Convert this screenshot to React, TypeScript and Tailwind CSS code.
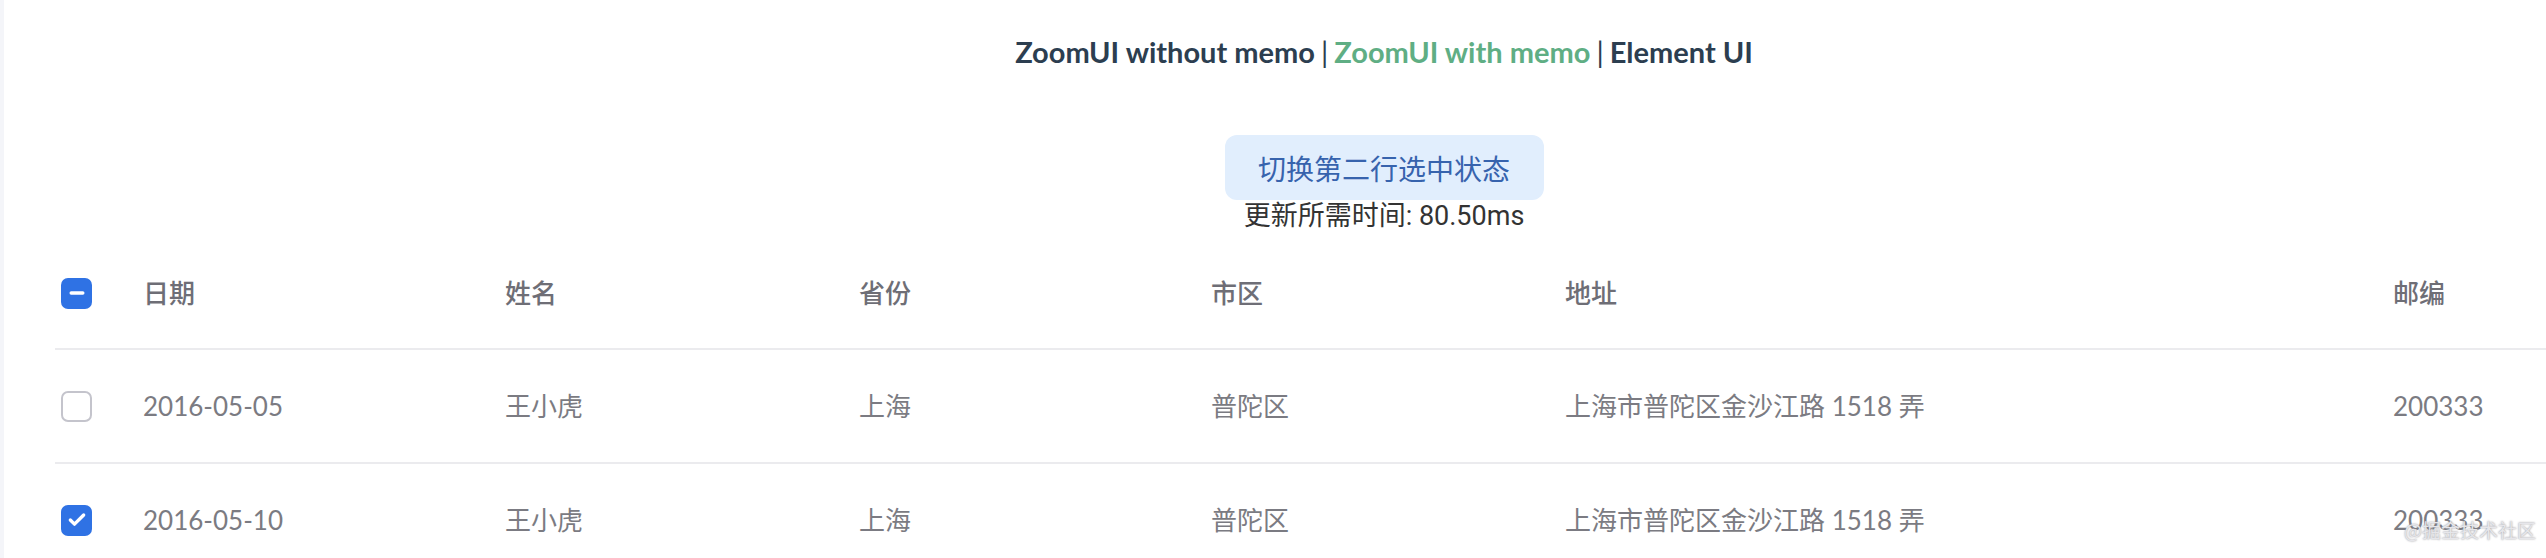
import { Check, Minus } from "lucide-react";

const rows = [
  {
    date: "2016-05-05",
    name: "王小虎",
    province: "上海",
    city: "普陀区",
    address: "上海市普陀区金沙江路 1518 弄",
    zip: "200333",
    checked: false,
  },
  {
    date: "2016-05-10",
    name: "王小虎",
    province: "上海",
    city: "普陀区",
    address: "上海市普陀区金沙江路 1518 弄",
    zip: "200333",
    checked: true,
  },
];

const cols = "grid grid-cols-[88px_362px_354px_352px_354px_828px_1fr] items-center";

function Box({ state }: { state: "on" | "off" | "half" }) {
  if (state === "off") {
    return <span className="block w-[31px] h-[31px] rounded-[7px] border-2 border-[#c4c4cc] bg-white" />;
  }
  return (
    <span className="flex w-[31px] h-[31px] rounded-[7px] bg-[#2f72e4] items-center justify-center text-white">
      {state === "on" ? <Check className="w-[20px] h-[20px]" strokeWidth={4} /> : <Minus className="w-[20px] h-[20px]" strokeWidth={4} />}
    </span>
  );
}

export default function App() {
  return (
    <div className="relative flex w-[2546px] h-[558px] overflow-hidden bg-white font-['Lato','Noto_Sans_CJK_SC',sans-serif]">
      <div className="w-[4px] shrink-0 bg-[#f4f5f9]" />

      <div className="w-[2760px] shrink-0 text-center">
        {/* Nav */}
        <nav className="pt-[32px] h-[72px] text-[29px] leading-[40px] font-bold text-[#2c3e50]">
          <span>ZoomUI without memo</span>
          <span className="font-normal mx-[6px]">|</span>
          <span className="text-[#5fae84]">ZoomUI with memo</span>
          <span className="font-normal mx-[6px]">|</span>
          <span>Element UI</span>
        </nav>

        <button className="mt-[63px] h-[65px] w-[319px] rounded-[12px] bg-[#e1eefd] text-[#3763ad] text-[28px] font-['Noto_Sans_CJK_SC',sans-serif]">
          切换第二行选中状态
        </button>
        <div className="h-[32px] leading-[32px] text-[27px] text-[#333333] font-['Roboto','Noto_Sans_CJK_SC',sans-serif]">
          更新所需时间: 80.50ms
        </div>

        {/* Table */}
        <div className="mt-[6px] ml-[51px] text-left text-[26px] font-['Lato','Noto_Sans_CJK_SC',sans-serif]">
          <div className={`${cols} h-[112px] border-b-2 border-[#ebebee] text-[#6e6e76] font-medium`}>
            <div className="pl-[6px]">
              <Box state="half" />
            </div>
            <div>日期</div>
            <div>姓名</div>
            <div>省份</div>
            <div>市区</div>
            <div>地址</div>
            <div>邮编</div>
          </div>
          {rows.map((r, i) => (
            <div key={i} className={`${cols} h-[114px] border-b-2 border-[#ebebee] text-[#7b7b82] font-normal`}>
              <div className="pl-[6px]">
                <Box state={r.checked ? "on" : "off"} />
              </div>
              <div>{r.date}</div>
              <div>{r.name}</div>
              <div>{r.province}</div>
              <div>{r.city}</div>
              <div>{r.address}</div>
              <div>{r.zip}</div>
            </div>
          ))}
        </div>
      </div>

      {/* watermark */}
      <div className="absolute right-[10px] bottom-[14px] text-[19px] text-[#e6e6ea] font-['Noto_Sans_CJK_SC',sans-serif] [text-shadow:0_0_2px_#8a8a90]">
        @掘金技术社区
      </div>
    </div>
  );
}
